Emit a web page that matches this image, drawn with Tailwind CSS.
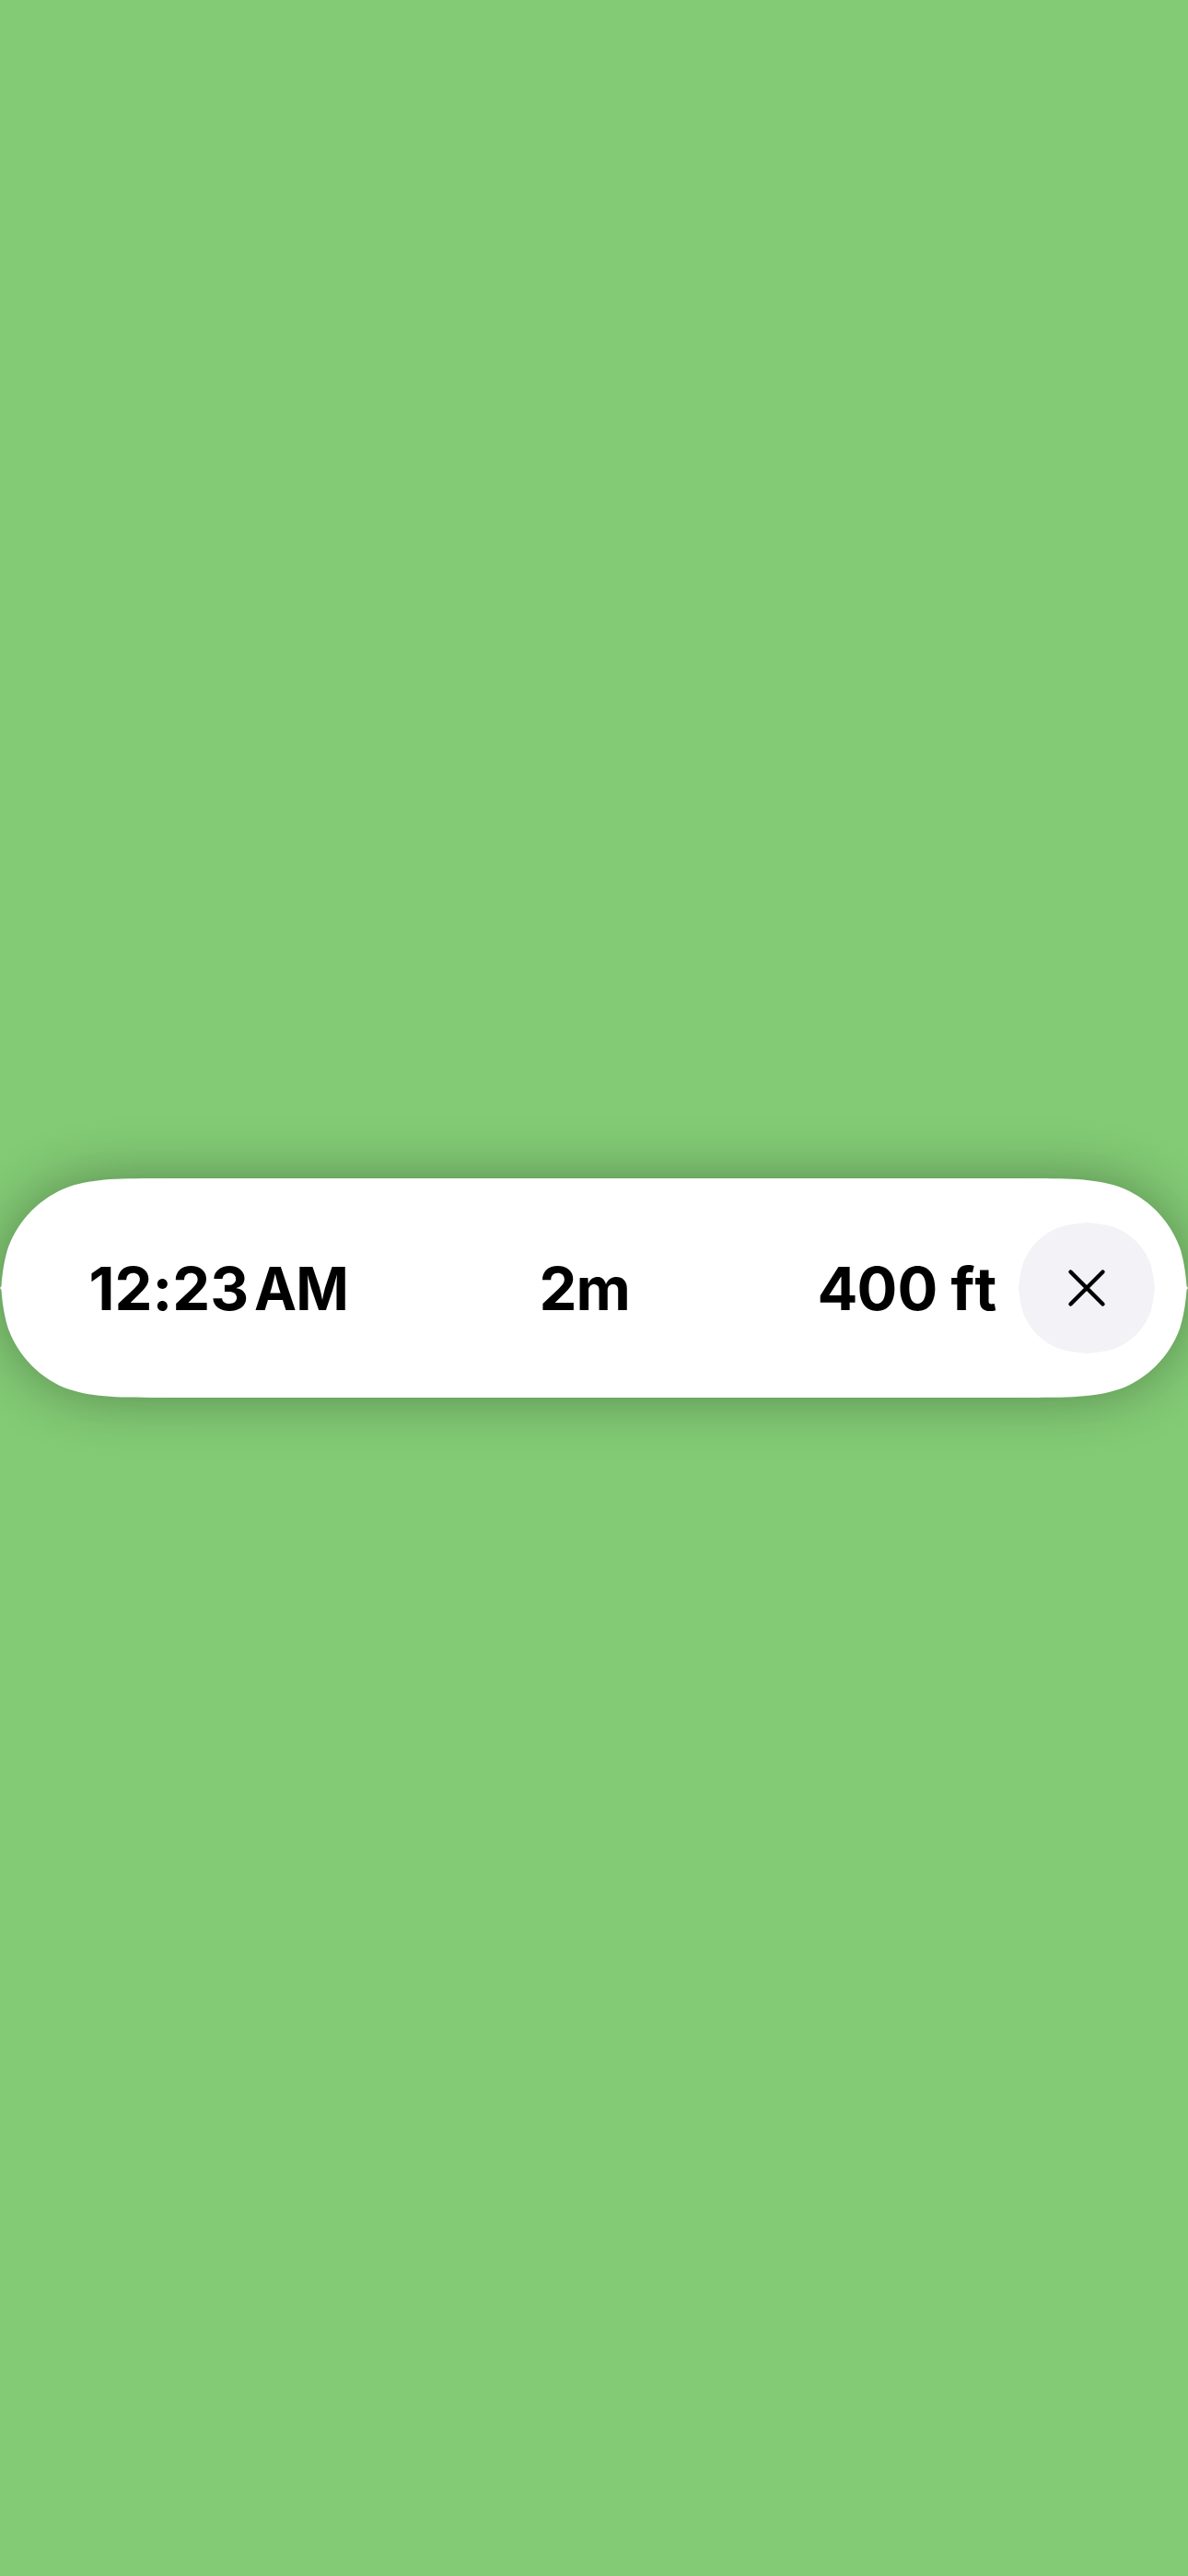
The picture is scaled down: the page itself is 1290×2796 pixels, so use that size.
<!DOCTYPE html>
<html lang="en">
<head>
<meta charset="utf-8">
<title>Trip summary</title>
<script src="https://cdn.jsdelivr.net/npm/@tailwindcss/browser@4"></script>
</head>
<body class="bg-[#83cb75]">
<main class="flex h-[2796px] w-[1290px] items-center overflow-hidden">
  <section class="relative isolate flex h-[238px] w-full items-center pl-[96.500px] pr-9 font-['Inter',sans-serif] text-[65px] leading-none font-bold text-black">
    <!-- Continuous-corner capsule -->
    <svg class="absolute inset-0 -z-10 h-[238px] w-[1290px] overflow-visible drop-shadow-[0_0_30px_rgba(0,0,0,0.33)]" viewBox="0 0 1290 238" fill="#fff">
      <path d="M181.9 0H1108.1C1160.5 0 1186.7 0 1214.9 8.9C1245.6 20.1 1269.9 44.4 1281.1 75.1C1285 87 1287.500 102 1288.500 117L1290 119L1288.500 121C1287.500 136 1285 151 1281.1 162.9C1269.9 193.6 1245.6 217.9 1214.9 229.1C1186.7 238 1160.5 238 1108.1 238H181.9C129.5 238 103.3 238 75.1 229.1C44.4 217.9 20.1 193.6 8.9 162.9C5 151 2.500 136 1.500 121L0 119L1.500 117C2.500 102 5 87 8.9 75.1C20.1 44.4 44.4 20.1 75.1 8.9C103.3 0 129.5 0 181.9 0Z"/>
    </svg>
    <span class="w-[489px] whitespace-nowrap tracking-[-2.300px]"><span class="tracking-[3.500px]">1</span>2<span class="tracking-[-0.700px]">:</span>23<span class="tracking-[-1px]">&#8239;</span><span class="-ml-[4px] inline-block origin-left scale-x-[0.950] tracking-[-1px]">AM</span></span>
    <span class="w-[302px] whitespace-nowrap tracking-[-1px]">2m</span>
    <span class="whitespace-nowrap tracking-[-0.700px]"><span class="tracking-[-1px]">4</span><span class="tracking-[0.300px]">0</span>0 <span class="tracking-[0.300px]">f</span>t</span>
    <button class="ml-auto h-[142px] w-[148px]" aria-label="Close">
      <svg class="block h-[142px] w-[148px]" viewBox="0 0 148 142">
        <path fill="#f2f2f7" d="M74 0C84 1 94 2 104 5C122 12 136 26 143 44C146 54 147 62 148 71C147 80 146 88 143 98C136 116 122 130 104 137C94 140 84 141 74 142C64 141 54 140 44 137C26 130 12 116 5 98C2 88 1 80 0 71C1 62 2 54 5 44C12 26 26 12 44 5C54 2 64 1 74 0Z"/>
        <path d="M56.500 53.500L91.500 88.500M91.500 53.500L56.500 88.500" fill="none" stroke="#000" stroke-width="4.400" stroke-linecap="round"/>
      </svg>
    </button>
  </section>
</main>
</body>
</html>
